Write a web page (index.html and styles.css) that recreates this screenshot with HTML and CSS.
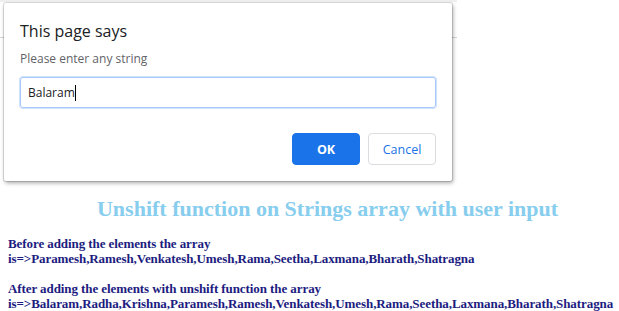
FILE: index.html
```html
<!DOCTYPE html>
<html lang="en">
<head>
  <meta charset="UTF-8">
  <meta name="viewport" content="width=device-width, initial-scale=1.0">
  <title>Unshift function on Strings array</title>
  <link rel="stylesheet" href="styles.css">
</head>
<body>
  <div class="topbar"></div>
  <div class="page">
    <h2 class="title">Unshift function on Strings array with user input</h2>
    <p class="result">
      Before adding the elements the array is=&gt;Paramesh,Ramesh,Venkatesh,Umesh,Rama,Seetha,Laxmana,Bharath,Shatragna<br><br>
      After adding the elements with unshift function the array is=&gt;Balaram,Radha,Krishna,Paramesh,Ramesh,Venkatesh,Umesh,Rama,Seetha,Laxmana,Bharath,Shatragna
    </p>
  </div>

  <!-- prompt() dialog drawn over the page -->
  <div class="dialog">
    <div class="dialog-title">This page says</div>
    <div class="dialog-message">Please enter any string</div>
    <div class="dialog-input">Balaram<span class="caret"></span></div>
    <div class="dialog-buttons">
      <button class="btn btn-ok">OK</button>
      <button class="btn btn-cancel">Cancel</button>
    </div>
  </div>
</body>
</html>
```

FILE: styles.css
```css
body {
  margin: 0;
  font-family: "Liberation Serif", serif;
  background: #fff;
  position: relative;
  height: 311px;
  overflow: hidden;
}

.topbar {
  width: 457px;
  height: 35px;
  border-top: 2px solid #efefef;
  border-bottom: 1px solid #d6d6d6;
}

.page {
  padding: 0 8px;
}

.title {
  margin: 158px 0 0;
  padding-left: 36px;
  text-align: center;
  font-size: 22px;
  line-height: 25px;
  font-weight: bold;
  color: #87cdee;
}

.result {
  margin: 15px 0 0;
  font-size: 13px;
  font-weight: bold;
  letter-spacing: -0.08px;
  color: #1c1c80;
  line-height: 15px;
}

.dialog {
  position: absolute;
  left: 4px;
  top: 3px;
  width: 448px;
  height: 178px;
  box-sizing: border-box;
  padding: 18px 16px 0 16px;
  background: #fff;
  border-radius: 2px;
  box-shadow: 0 0 0 1px rgba(0, 0, 0, 0.12), 1px 2px 4px rgba(0, 0, 0, 0.35);
  font-family: "Open Sans", sans-serif;
}

.dialog-title {
  font-size: 16px;
  color: #202124;
  line-height: 21px;
}

.dialog-message {
  margin-top: 8px;
  font-size: 12px;
  color: #5f6368;
  line-height: 17px;
}

.dialog-input {
  margin-top: 10px;
  height: 31px;
  box-sizing: border-box;
  border: 1px solid #a8c7fa;
  border-radius: 3px;
  box-shadow: 0 0 0 1px #d2e3fc;
  padding: 0 7px;
  font-size: 12px;
  line-height: 29px;
  color: #202124;
  display: flex;
  align-items: center;
}

.caret {
  display: inline-block;
  width: 1px;
  height: 16px;
  background: #000;
}

.dialog-buttons {
  margin-top: 25px;
  display: flex;
  justify-content: flex-end;
  gap: 8px;
}

.btn {
  width: 68px;
  height: 32px;
  border-radius: 4px;
  font-family: "Open Sans", sans-serif;
  font-size: 12.5px;
  cursor: pointer;
}

.btn-ok {
  background: #1a73e8;
  border: 1px solid #1a73e8;
  color: #fff;
  font-weight: bold;
}

.btn-cancel {
  background: #fff;
  border: 1px solid #dadce0;
  color: #1a73e8;
}
```
